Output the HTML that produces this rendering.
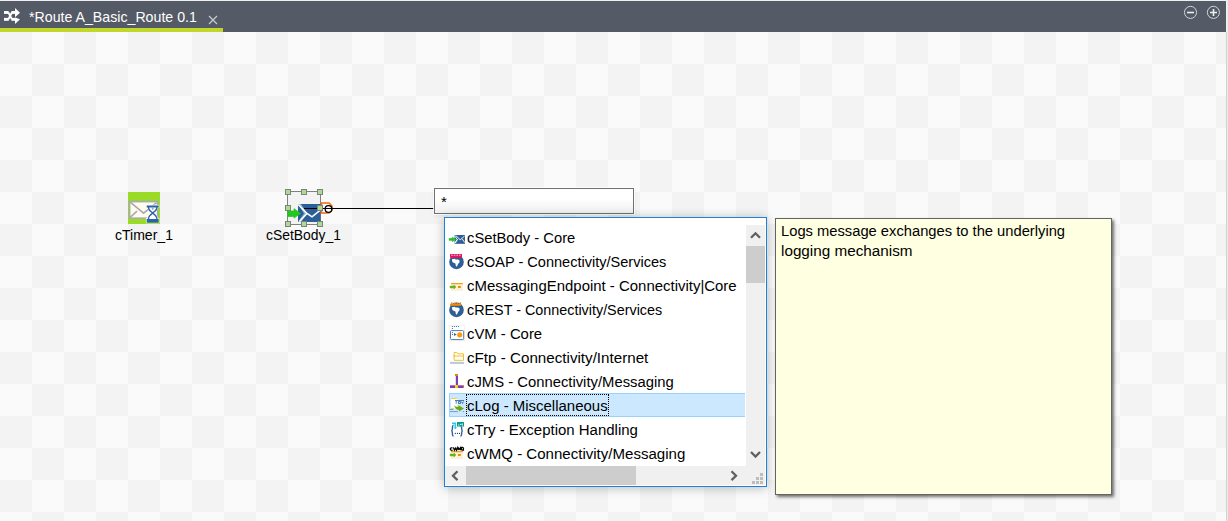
<!DOCTYPE html>
<html><head><meta charset="utf-8"><style>
html,body{margin:0;padding:0;width:1228px;height:521px;overflow:hidden;}
body{position:relative;font-family:"Liberation Sans",sans-serif;background:#f0f0f0;}
.a{position:absolute;}
svg{display:block;overflow:visible;}
#hdr{left:0;top:1px;width:1226px;height:31px;background:#545a66;}
#tabline{left:0;top:28px;width:223px;height:4px;background:#c1d72a;}
#title{left:28.7px;top:7px;font-size:15px;color:#fff;white-space:pre;line-height:20px;transform-origin:0 0;transform:scaleX(.945);}
#canvas{left:0;top:32px;width:1226px;height:489px;
 background:conic-gradient(#fafafa 25%,#f3f3f3 0 50%,#fafafa 0 75%,#f3f3f3 0) 0 0/64px 64px;}
#rb1{left:1226px;top:32px;width:1px;height:489px;background:#d2d2d2;}
#rb2{left:1227px;top:0;width:1px;height:521px;background:#ebebeb;}
.lbl{font-size:15.5px;color:#000;white-space:pre;line-height:18px;transform-origin:0 0;}
#input{left:434px;top:188px;width:198px;height:24px;border:1px solid #707070;background:linear-gradient(#fff 40%,#f0f0f0);box-shadow:0 0 0 1px rgba(255,255,255,.8),0 2px 4px rgba(0,0,0,.08);}
#star{left:6px;top:5px;font-size:15px;line-height:15px;color:#000;}
#popup{left:444px;top:217px;width:321px;height:268px;border:1px solid #1c81d9;background:#fff;box-shadow:0 1px 10px rgba(0,0,0,.26);}
#vs{left:301px;top:7px;width:19px;height:241px;background:#f0f0f0;}
#vthumb{left:301px;top:28px;width:19px;height:37px;background:#cdcdcd;}
#hs{left:0;top:248px;width:320px;height:19px;background:#f0f0f0;}
#hthumb{left:21px;top:248px;width:170px;height:19px;background:#cdcdcd;}
.row{position:absolute;left:4px;width:297px;height:24px;font-size:15px;line-height:24px;color:#000;white-space:pre;}
.row .t{position:absolute;left:17.5px;top:1px;font-size:15.5px;transform-origin:0 0;}
.row svg{position:absolute;left:-2px;top:3px;}
#sel{background:#cce8ff;width:296px;box-shadow:inset 1px 0 0 #99d1ff,inset 0 1px 0 #99d1ff,inset 0 -1px 0 #99d1ff;}
#focus{position:absolute;left:17px;top:1px;width:143px;height:22px;box-sizing:border-box;border:1px dotted #000;}
#tip{left:775px;top:218px;width:335px;height:275px;border:1px solid #646464;background:#ffffe1;box-shadow:2px 2px 3px rgba(0,0,0,.55);}
.tt{left:5px;font-size:15.5px;line-height:20px;color:#000;white-space:pre;transform-origin:0 0;}
</style></head><body>
<div class="a" id="hdr"></div>
<div class="a" id="tabline"></div>
<svg class="a" style="left:4px;top:8px" width="16" height="16" viewBox="0 0 16 16">
 <g fill="#fff">
  <rect x="0" y="3" width="4.6" height="2.9"/>
  <rect x="0" y="9.9" width="4.8" height="2.9"/>
  <rect x="7.4" y="3" width="4" height="2.9"/>
  <rect x="7.4" y="9.9" width="4" height="2.9"/>
  <path d="M11 -.1L16 4.7L11 9.3z"/>
  <path d="M11 9.6L16 11.3L11 16z"/>
 </g>
 <path d="M4.3 11.4L8 4.4M4.3 4.4L8 11.4" stroke="#fff" stroke-width="2"/>
</svg>
<div class="a" id="title">*Route A_Basic_Route 0.1</div>
<svg class="a" style="left:208px;top:15px" width="10" height="10" viewBox="0 0 10 10"><path d="M1 1L9 9M9 1L1 9" stroke="#c9cbd0" stroke-width="1.2"/></svg>
<svg class="a" style="left:1183px;top:5px" width="38" height="15" viewBox="0 0 38 15">
 <g fill="none" stroke="#d2d4d8" stroke-width="1">
  <circle cx="7.5" cy="7.4" r="6.05"/>
  <circle cx="30.4" cy="7.4" r="6.05"/>
 </g>
 <g stroke="#eceef0" stroke-width="1.6">
  <path d="M4 7.5h7"/>
  <path d="M27 7.5h7M30.5 4v7"/>
 </g>
</svg>
<div class="a" id="canvas"></div>
<div class="a" id="rb1"></div>
<div class="a" id="rb2"></div>

<!-- cTimer -->
<svg class="a" style="left:128px;top:192px" width="32" height="32" viewBox="0 0 32 32">
 <rect x="0" y="0" width="32" height="32" fill="#9adb26"/>
 <rect x="1.6" y="9.6" width="28" height="16.6" fill="#fffcec" stroke="#a9a8b4" stroke-width="1.6"/>
 <path d="M2.2 10.2L15.6 21.2L28.6 10.6M2.2 25.4L9 19.2" fill="none" stroke="#a9a8b4" stroke-width="1.6"/>
 <path d="M17.9 12.7h13.4v3.4h-1.3c-.4 2.4-2.4 3.8-3.8 4.9 1.4 1.1 3.4 2.5 3.8 4.9h1.3v5.4H17.9v-5.4h1.3c.4-2.4 2.4-3.8 3.8-4.9-1.4-1.1-3.4-2.5-3.8-4.9h-1.3z" fill="#fff" opacity=".85"/>
 <path d="M18.7 13.5h12v1.9h-1.1c-.1 2.8-2.4 4.4-3.9 5.6 1.5 1.2 3.8 2.8 3.9 6h1.1v3.8h-12v-3.8h1.1c.1-3.2 2.4-4.8 3.9-6-1.5-1.2-3.8-2.8-3.9-5.6h-1.1z" fill="#2b62a1"/>
 <path d="M21.2 15.4h7c-.2 2.3-2.3 3.7-3.5 4.7-1.2-1-3.3-2.4-3.5-4.7z" fill="#fff"/>
 <path d="M21.1 27h7.2c-.2-2.6-2.3-4-3.6-5.1-1.3 1.1-3.4 2.5-3.6 5.1z" fill="#fff"/>
 <path d="M23.4 16.4h2.6l-1.3 1.4z" fill="#2b62a1"/>
</svg>
<div class="a lbl" style="left:115px;top:226px;transform:scaleX(.905)">cTimer_1</div>

<!-- cSetBody -->
<svg class="a" style="left:284px;top:188px" width="52" height="40" viewBox="0 0 52 40">
 <path d="M3.5 3.5H36.5V36.5H3.5z" fill="none" stroke="#828282" stroke-width="1"/>
 <path d="M14 16h22.5v18H14z" fill="#2a5f97"/>
 <path d="M14 16h3l6 9.4-6 8.6h-3l6-8.6z" fill="#8fb0d4"/>
 <path d="M14.2 16.5L23 25.4L15.4 33.4M23 25.4L28 28.8L36 22.3" fill="none" stroke="#fff" stroke-width="1.5"/>
 <path d="M3.8 23H10V20.7L16.5 25.4L10 30V28.4H3.8z" fill="#22c81e" stroke="#22c81e" stroke-width=".8" stroke-linejoin="round"/>
 <path d="M37.5 15h7.5l3 3v4l-3 3h-7.5z" fill="none" stroke="#f06b12" stroke-width="1.6"/>
 <ellipse cx="44.5" cy="21" rx="3.3" ry="3.4" fill="#fff" stroke="#000" stroke-width="1.3"/>
 <path d="M20 20.5H52" stroke="#000" stroke-width="1"/>
 <g fill="#a9dd92" stroke="#7e7e7e" stroke-width="1">
  <rect x="1.5" y="1.5" width="5" height="5"/><rect x="17.5" y="1.5" width="5" height="5"/><rect x="33.5" y="1.5" width="5" height="5"/>
  <rect x="1.5" y="17.5" width="5" height="5"/><rect x="33.5" y="17.5" width="5" height="5"/>
  <rect x="1.5" y="33.5" width="5" height="5"/><rect x="17.5" y="33.5" width="5" height="5"/><rect x="33.5" y="33.5" width="5" height="5"/>
 </g>
</svg>
<div class="a lbl" style="left:265.8px;top:226px;transform:scaleX(.897)">cSetBody_1</div>
<div class="a" style="left:336px;top:208px;width:98px;height:1px;background:#000"></div>

<div class="a" id="input"><div class="a" id="star">*</div></div>

<div class="a" id="popup">
 <div class="a" id="vs"></div>
 <div class="a" id="vthumb"></div>
 <div class="a" id="hs"></div>
 <div class="a" id="hthumb"></div>
 <svg class="a" style="left:301px;top:7px" width="19" height="260" viewBox="0 0 19 260">
  <path d="M5 12.8L9.5 8.3L14 12.8" fill="none" stroke="#606060" stroke-width="2.3"/>
  <path d="M5 227L9.5 231.5L14 227" fill="none" stroke="#606060" stroke-width="2.3"/>
 </svg>
 <svg class="a" style="left:0;top:248px" width="320" height="19" viewBox="0 0 320 19">
  <path d="M12.5 5.3L8 9.7L12.5 14.1" fill="none" stroke="#606060" stroke-width="2.3"/>
  <path d="M286.5 5.3L291 9.7L286.5 14.1" fill="none" stroke="#606060" stroke-width="2.3"/>
  <g fill="#bdbdbd"><rect x="315" y="7" width="3" height="3"/><rect x="311" y="11" width="3" height="3"/><rect x="315" y="11" width="3" height="3"/><rect x="307" y="15" width="3" height="3"/><rect x="311" y="15" width="3" height="3"/><rect x="315" y="15" width="3" height="3"/></g>
 </svg>

 <div class="row" style="top:7px"><svg width="20" height="20" viewBox="0 0 20 20">
  <path d="M7.5 7h10.5v8.8H7.5z" fill="#2b5f97"/>
  <path d="M7.5 7.6L10.2 11.4L7.5 15.2M8.6 7.4L13.2 11.8L17.6 8M10.8 11.2L8.2 15.2M15.2 10.8L17.8 14.6" fill="none" stroke="#fff" stroke-width=".9"/>
  <path d="M2.2 10.5h3V9.2l3.6 2.2-3.6 2.2v-1.3h-3z" fill="#22c022" stroke="#22c022" stroke-width=".7" stroke-linejoin="round"/>
 </svg><span class="t" style="transform:scaleX(0.952)">cSetBody - Core</span></div>

 <div class="row" style="top:31px"><svg width="20" height="20" viewBox="0 0 20 20">
  <circle cx="9.5" cy="9.9" r="7.3" fill="#2c5f96"/>
  <path d="M5 7.2L7.5 6.8L8.6 7.6L11 7.4L12.6 8.6L12.4 10.6L11 12L10 14.6L9 14.4L8.4 11.6L6 10.4L5 9z" fill="#fff"/>
  <rect x="3" y="2" width="12" height="3.8" fill="#e8135e"/>
  <path d="M4.2 3.2h1.6M6.8 3.2h1.6M9.4 3.2h1.6M12 3.2h1.6" stroke="#fff" stroke-width=".8"/>
 </svg><span class="t" style="transform:scaleX(0.938)">cSOAP - Connectivity/Services</span></div>

 <div class="row" style="top:55px"><svg width="20" height="20" viewBox="0 0 20 20">
  <rect x="4" y="8" width="12" height="7" fill="#fdf0da"/>
  <rect x="4" y="7" width="12" height="1.2" rx=".6" fill="#f2a200"/>
  <path d="M3 10h4V9l2 2-2 2v-1H3z" fill="#6db21a" stroke="#6db21a" stroke-width=".5"/>
  <rect x="11" y="10" width="2.8" height="2" fill="#e49400"/>
 </svg><span class="t" style="transform:scaleX(0.964)">cMessagingEndpoint - Connectivity|Core</span></div>

 <div class="row" style="top:79px"><svg width="20" height="20" viewBox="0 0 20 20">
  <circle cx="9.5" cy="9.9" r="7.3" fill="#2c5f96"/>
  <path d="M5 7.2L7.5 6.8L8.6 7.6L11 7.4L12.6 8.6L12.4 10.6L11 12L10 14.6L9 14.4L8.4 11.6L6 10.4L5 9z" fill="#fff"/>
  <path d="M3 5.8h11V2.2h-1.2v1.6h-1.6V2.4H9.8v1.4H8.4V2.4H7v1.4H5.6V2.2H4.2v1.6H3z" fill="#f28c00"/>
 </svg><span class="t" style="transform:scaleX(0.926)">cREST - Connectivity/Services</span></div>

 <div class="row" style="top:103px"><svg width="20" height="20" viewBox="0 0 20 20">
  <rect x="2.2" y="1.2" width="15.6" height="15.6" fill="none" stroke="#e8e8e8" stroke-width=".6"/>
  <g fill="#2c64a0"><circle cx="5.4" cy="2.5" r=".6"/><circle cx="7.5" cy="2.5" r=".6"/><circle cx="9.5" cy="2.5" r=".6"/><circle cx="11.5" cy="2.5" r=".6"/><circle cx="5.4" cy="4.5" r=".6"/><circle cx="5.4" cy="8.4" r=".5"/><circle cx="5.4" cy="10.4" r=".6"/></g>
  <rect x="3.5" y="6.6" width="13.2" height="9" rx="1" fill="none" stroke="#4a7cb4" stroke-width="1"/>
  <path d="M7 9l2.6 1.6L7 12z" fill="#2c64a0"/>
  <circle cx="12.7" cy="10.8" r="2.6" fill="#ff9a00"/>
 </svg><span class="t" style="transform:scaleX(0.958)">cVM - Core</span></div>

 <div class="row" style="top:127px"><svg width="20" height="20" viewBox="0 0 20 20">
  <path d="M7.2 12.3V4.5h2.6l1 1.3h5.7v6.5zM6 8h10.6" fill="none" stroke="#f0c02a" stroke-width="1"/>
  <rect x="3" y="13.8" width="14" height="2.2" fill="#bccbde"/>
 </svg><span class="t" style="transform:scaleX(0.979)">cFtp - Connectivity/Internet</span></div>

 <div class="row" style="top:151px"><svg width="20" height="20" viewBox="0 0 20 20">
  <rect x="8.8" y="3" width="2.2" height="10" fill="#7b40ae"/>
  <rect x="8" y="2" width="3" height="2" fill="#d88a10"/>
  <rect x="3" y="13" width="14" height="3" fill="#7b40ae"/>
  <rect x="3" y="13" width="14" height=".8" fill="#c878f0"/>
  <rect x="8" y="13" width="3" height="3" fill="#f8d400"/>
  <rect x="16.2" y="13" width=".8" height="3" fill="#e09020"/>
 </svg><span class="t" style="transform:scaleX(0.956)">cJMS - Connectivity/Messaging</span></div>

 <div class="row" id="sel" style="top:175px"><svg width="20" height="20" viewBox="0 0 20 20">
  <rect x="4" y="2.2" width="6.5" height="10.3" fill="#fff"/>
  <path d="M4 2.5h6.2M4 12.4h3" stroke="#f0d020" stroke-width=".9"/>
  <path d="M8 4.5h9M9.2 4.5v3M11.5 5.5h2v2h-2zM14.5 5.5l1 2 1-2" fill="none" stroke="#3a6ea8" stroke-width=".9"/>
  <path d="M7 9.5c1.2 1 2.6 1.4 4.4 1.3V9.2l5.6 3.2-5 3.2v-1.6c-2 0-3.8-1.2-5-4.5z" fill="#6aaa10"/>
  <path d="M3 13.5h3.2M3 15.6h8M15.8 15.6h1.2" stroke="#5a86b8" stroke-width=".8"/>
 </svg><span class="t" style="transform:scaleX(0.966)">cLog - Miscellaneous</span><div id="focus"></div></div>

 <div class="row" style="top:199px"><svg width="20" height="20" viewBox="0 0 20 20">
  <path d="M6.6 5.2C5.3 5.2 5.3 6.4 5.3 9.2c0 .9-.3 1.5-1 1.6.7.1 1 .7 1 1.6 0 2.6 0 3.6 1.3 3.6M13.6 6.6c1.2 0 1.1 1 1.1 2.6 0 .9.3 1.5 1 1.6-.7.1-1 .7-1 1.6 0 2.6 0 3.6-1.3 3.6" fill="none" stroke="#2c64a0" stroke-width="1.4"/>
  <path d="M5 3.3h3.3v4.5" fill="none" stroke="#22cdef" stroke-width="1.5"/>
  <path d="M6.4 7.2h3.8L8.3 9.2z" fill="#22cdef"/>
  <rect x="10" y="2" width="7" height="4.5" fill="#0a9a8c"/>
  <path d="M11 5h1.4M12.9 4.4h1.6M15.4 3.4v2.2" stroke="#fff" stroke-width=".8"/>
  <g fill="#222"><circle cx="8.3" cy="13.4" r=".55"/><circle cx="10.4" cy="13.4" r=".55"/><circle cx="12.5" cy="13.4" r=".55"/></g>
 </svg><span class="t" style="transform:scaleX(0.966)">cTry - Exception Handling</span></div>

 <div class="row" style="top:223px"><svg width="20" height="20" viewBox="0 0 20 20">
  <rect x="4" y="8" width="12" height="7" fill="#fdf0da"/>
  <rect x="4" y="7" width="12" height="1.2" rx=".6" fill="#f2a200"/>
  <path d="M3 10h4V9l2 2-2 2v-1H3z" fill="#6db21a" stroke="#6db21a" stroke-width=".5"/>
  <rect x="11" y="10" width="2.8" height="2" fill="#e49400"/>
  <path d="M5.6 4c-1.5-.6-2.6 0-2.2 1.4.4 1 1.6 1 2.2.6M6.4 3.4l1 2.8 1-2 1 2 1-2.8M11 6.2V3.6l1.3 1.6 1.3-1.6v2.6M15.4 3.4c-1.4 0-1.6 2.6 0 2.6s1.4-2.6 0-2.6zM15.6 5.4l1.2 1.2" fill="none" stroke="#000" stroke-width="1.25"/>
 </svg><span class="t" style="transform:scaleX(0.971)">cWMQ - Connectivity/Messaging</span></div>
</div>

<div class="a" id="tip">
 <div class="a tt" style="top:2px;transform:scaleX(.950)">Logs message exchanges to the underlying</div>
 <div class="a tt" style="top:22px;transform:scaleX(.985)">logging mechanism</div>
</div>
</body></html>
